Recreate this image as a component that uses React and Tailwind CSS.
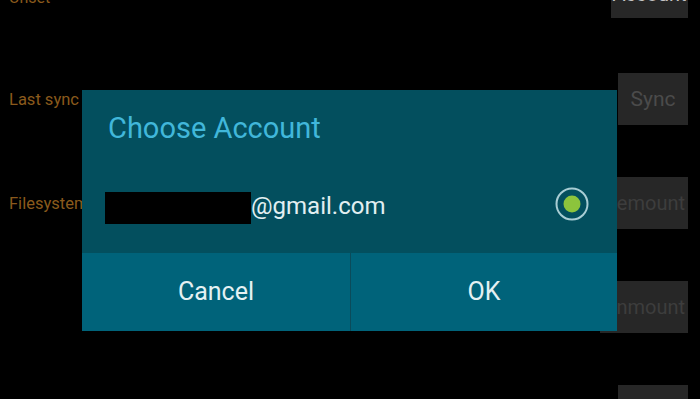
import React from "react";

function Radio() {
  return (
    <svg width="34" height="34" viewBox="0 0 34 34">
      <circle cx="17" cy="17" r="15.5" fill="none" stroke="#a8cdd4" strokeWidth="2" />
      <circle cx="17" cy="17" r="8.5" fill="#8cc43c" />
    </svg>
  );
}

export default function App() {
  const btn =
    "h-[52px] min-w-[70px] px-[3px] flex justify-center bg-[#272727] text-[20px] leading-[24px] whitespace-nowrap";
  return (
    <div className="relative w-[700px] h-[399px] bg-black overflow-hidden font-['Roboto',sans-serif]">
      {/* background settings screen */}
      <div className="flex flex-col pl-[9px] pr-[12px]">
        <div className="mt-[-34px] h-[52px] flex items-end justify-between">
          <span className="pb-[11px] text-[16px] leading-[19px] text-[#8a5a1c]">Unset</span>
          <div className={btn + " items-end pb-[12px] bg-[#2a2b2e] text-[#c4c4c4] w-[77px]"}>Account</div>
        </div>
        <div className="mt-[55px] h-[52px] flex items-center justify-between">
          <span className="text-[16.5px] leading-[19px] text-[#8a5a1c]">Last sync</span>
          <div className={btn + " items-center text-[#4b4b4b] text-[21px]"}>Sync</div>
        </div>
        <div className="mt-[52px] h-[52px] flex items-center justify-between">
          <span className="text-[16.5px] leading-[19px] text-[#8a5a1c]">Filesystem</span>
          <div className={btn + " items-center text-[#3d3d3d]"}>Remount</div>
        </div>
        <div className="mt-[52px] h-[52px] flex items-center justify-end">
          <div className={btn + " items-center text-[#3d3d3d]"}>Unmount</div>
        </div>
        <div className="mt-[52px] h-[52px] flex items-center justify-end">
          <div className={btn + " items-center w-[70px]"} />
        </div>
      </div>

      {/* dialog */}
      <div className="absolute left-[82px] top-[90px] w-[535px] h-[241px] flex flex-col">
        <div className="h-[163px] bg-[#034f5e] flex flex-col">
          <div className="pt-[21px] pl-[26px] text-[29px] leading-[34px] text-[#41b7da]">
            Choose Account
          </div>
          <div className="mt-[47px] pl-[23px] pr-[28px] flex items-start">
            <div className="w-[146px] h-[32px] bg-black" />
            <span className="text-[24px] leading-[28px] text-[#e2eff1]">@gmail.com</span>
            <div className="ml-auto mt-[-5px]">
              <Radio />
            </div>
          </div>
        </div>
        <div className="flex-1 flex bg-[#00637a] text-[25px] text-[#e4f1f3]">
          <div className="w-[268px] flex items-center justify-center">Cancel</div>
          <div className="w-px bg-[#0b4b5a]" />
          <div className="flex-1 flex items-center justify-center">OK</div>
        </div>
      </div>
    </div>
  );
}
